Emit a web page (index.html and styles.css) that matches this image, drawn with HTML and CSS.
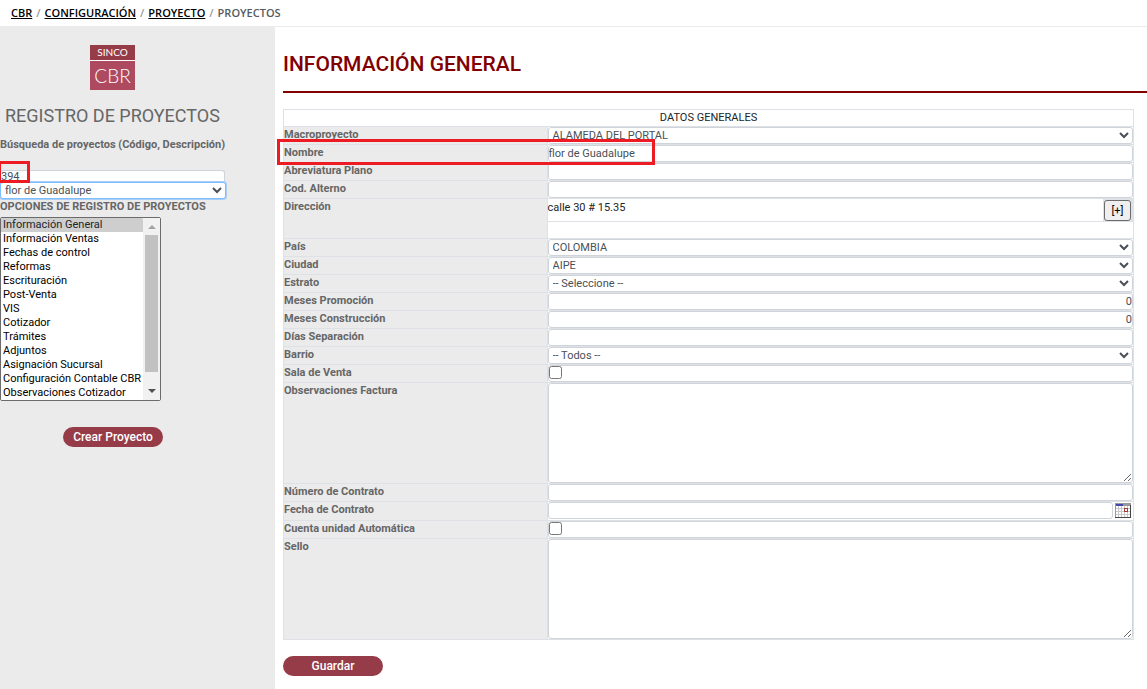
FILE: index.html
```html
<!DOCTYPE html>
<html lang="es">
<head>
<meta charset="utf-8">
<meta name="viewport" content="width=device-width, initial-scale=1">
<title>Proyectos</title>
<link rel="stylesheet" href="styles.css">
</head>
<body>
<nav class="breadcrumb" aria-label="Ruta">
  <a href="#">CBR</a><span class="sep">/</span><a href="#">CONFIGURACIÓN</a><span class="sep">/</span><a href="#">PROYECTO</a><span class="sep">/</span><span>PROYECTOS</span>
</nav>
<div class="layout">
  <aside class="sidebar">
    <div class="logo"><span class="logo-top">SINCO</span><span class="logo-main">CBR</span></div>
    <h2 class="side-title">REGISTRO DE PROYECTOS</h2>
    <label class="side-label search-label" for="codigo">Búsqueda de proyectos (Código, Descripción)</label>
    <div class="search">
      <input class="field search-input" id="codigo" type="text" value="394">
      <span class="mark mark-code"></span>
      <select class="field search-select" aria-label="Proyecto"><option>flor de Guadalupe</option></select>
    </div>
    <label class="side-label" for="opciones">OPCIONES DE REGISTRO DE PROYECTOS</label>
    <div class="listbox">
      <select class="options" id="opciones" size="13">
        <option selected>Información General</option>
        <option>Información Ventas</option>
        <option>Fechas de control</option>
        <option>Reformas</option>
        <option>Escrituración</option>
        <option>Post-Venta</option>
        <option>VIS</option>
        <option>Cotizador</option>
        <option>Trámites</option>
        <option>Adjuntos</option>
        <option>Asignación Sucursal</option>
        <option>Configuración Contable CBR</option>
        <option>Observaciones Cotizador</option>
      </select>
      <div class="scrollbar" aria-hidden="true">
        <svg width="8" height="4" viewBox="0 0 8 4"><path fill="#a3a3a3" d="M0 4h8L4 0z"/></svg>
        <span class="thumb"></span>
        <svg width="8" height="4" viewBox="0 0 8 4"><path fill="#505050" d="M0 0h8L4 4z"/></svg>
      </div>
    </div>
    <button class="pill create" type="button">Crear Proyecto</button>
  </aside>
  <main class="main">
    <h1 class="title">INFORMACIÓN GENERAL</h1>
    <form class="form">
      <table class="data">
        <colgroup><col class="col-label"><col></colgroup>
        <thead><tr><th class="caption" colspan="2">DATOS GENERALES</th></tr></thead>
        <tbody>
          <tr><th><label for="macro">Macroproyecto</label></th><td><select class="field" id="macro"><option>ALAMEDA DEL PORTAL</option></select></td></tr>
          <tr class="marked"><th><label for="nombre">Nombre</label><span class="mark mark-name"></span></th><td><input class="field" id="nombre" type="text" value="flor de Guadalupe"></td></tr>
          <tr><th><label for="abrev">Abreviatura Plano</label></th><td><input class="field" id="abrev" type="text"></td></tr>
          <tr><th><label for="alterno">Cod. Alterno</label></th><td><input class="field" id="alterno" type="text"></td></tr>
          <tr><th>Dirección</th><td class="address-cell"><div class="address"><span class="address-text">calle 30 # 15.35</span><button class="plus" type="button">[+]</button></div></td></tr>
          <tr><th><label for="pais">País</label></th><td><select class="field" id="pais"><option>COLOMBIA</option></select></td></tr>
          <tr><th><label for="ciudad">Ciudad</label></th><td><select class="field" id="ciudad"><option>AIPE</option></select></td></tr>
          <tr><th><label for="estrato">Estrato</label></th><td><select class="field" id="estrato"><option>-- Seleccione --</option></select></td></tr>
          <tr><th><label for="promo">Meses Promoción</label></th><td><input class="field number" id="promo" type="text" value="0"></td></tr>
          <tr><th><label for="constr">Meses Construcción</label></th><td><input class="field number" id="constr" type="text" value="0"></td></tr>
          <tr><th><label for="dias">Días Separación</label></th><td><input class="field" id="dias" type="text"></td></tr>
          <tr><th><label for="barrio">Barrio</label></th><td><select class="field" id="barrio"><option>-- Todos --</option></select></td></tr>
          <tr><th><label for="sala">Sala de Venta</label></th><td><div class="field check"><input type="checkbox" id="sala"></div></td></tr>
          <tr><th><label for="obs">Observaciones Factura</label></th><td><textarea class="field area" id="obs"></textarea></td></tr>
          <tr><th><label for="contrato">Número de Contrato</label></th><td><input class="field" id="contrato" type="text"></td></tr>
          <tr><th><label for="fecha">Fecha de Contrato</label></th><td><div class="date"><input class="field" id="fecha" type="text"><button class="calendar" type="button" aria-label="Calendario"><svg width="16" height="15" viewBox="0 0 16 15" shape-rendering="crispEdges"><path fill="#c8c8c8" d="M0 0h16v15H0z"/><path fill="#999" d="M0 0h16v3H0zM0 0h1v15H0z"/><path fill="#4646ae" d="M1 1h7v2H1z"/><path fill="#fff" d="M1 3h2v2H1zm3 0h2v2H4zm3 0h2v2H7zm3 0h2v2h-2zm3 0h2v2h-2zM1 6h2v2H1zm3 0h2v2H4zm3 0h2v2H7zm6 0h2v2h-2zM1 9h2v2H1zm3 0h2v2H4zm3 0h2v2H7zm3 0h2v2h-2zm3 0h2v2h-2zM1 12h2v2H1zm3 0h2v2H4zm3 0h2v2H7zm3 0h2v2h-2zm3 0h2v2h-2z"/><path fill="#a33a38" d="M9 5h4v4H9z"/><path fill="#fff" d="M10 6h2v2h-2z"/><path fill="#444" d="M0 14h16v1H0zM15 2h1v13h-1z"/></svg></button></div></td></tr>
          <tr><th><label for="cuenta">Cuenta unidad Automática</label></th><td><div class="field check"><input type="checkbox" id="cuenta"></div></td></tr>
          <tr><th><label for="sello">Sello</label></th><td><textarea class="field area" id="sello"></textarea></td></tr>
        </tbody>
      </table>
      <button class="pill" type="button">Guardar</button>
    </form>
  </main>
</div>
</body>
</html>
```
FILE: styles.css
```css
* { box-sizing: border-box; }
body {
  margin: 0;
  min-height: 100vh;
  display: flex;
  flex-direction: column;
  background: #fff;
  color: #212529;
  font: 11px/16px Roboto, "Liberation Sans", sans-serif;
}
button, input, select, textarea { font: inherit; margin: 0; }

.breadcrumb {
  display: flex;
  height: 27px;
  align-items: center;
  padding-left: 11px;
  border-bottom: 1px solid #ebebeb;
  color: #555b61;
  font: 600 11px/16px "Open Sans", "Noto Sans", sans-serif;
}
.breadcrumb a { color: #000; }
.sep { padding: 0 4px; color: #999; }

.layout { display: flex; flex: 1; }
.sidebar {
  flex: 0 0 275px;
  display: flex;
  flex-direction: column;
  align-items: flex-start;
  padding-top: 18px;
  background: #ebebeb;
  color: #666;
}
.logo {
  display: grid;
  grid-template-rows: 15px 29px;
  gap: 1px;
  width: 45px;
  margin-left: 90px;
  background: #fff;
  color: #fff;
  text-align: center;
  font-family: Lato, sans-serif;
}
.logo-top { background: #963c49; font-size: 10px; line-height: 15px; }
.logo-main { background: #ae4a60; font-size: 19px; line-height: 29px; font-weight: 300; }
.side-title { margin: 14px 0 0 5px; font-size: 18px; line-height: 24px; font-weight: 400; }
.side-label { font-weight: 700; }
.search-label { margin: 9px 0 17px; }
.search { position: relative; width: 226px; }
.field {
  display: block;
  width: 100%;
  height: 17px;
  padding: 0;
  border: 1px solid #ced4da;
  border-radius: 3px;
  background-color: #fff;
  color: #495057;
  outline: 0;
}
.search-input { width: 225px; height: 12px; border-bottom: 0; border-radius: 3px 3px 0 0; }
.search-select { height: 17px; border-color: #80bdff; box-shadow: 0 0 0 1px #a9cdf5; }
.listbox {
  display: flex;
  width: 161px;
  height: 184px;
  margin-top: 2px;
  border: 1px solid #6b6b6b;
  border-radius: 2px;
  background: #fff;
}
.options {
  flex: 1;
  min-width: 0;
  height: 182px;
  padding: 0;
  border: 0;
  background: #fff;
  color: #000;
  outline: 0;
  overflow: hidden;
}
.options option { height: 14px; min-height: 14px; padding: 0 2px 1px; line-height: 13px; }
.options option:checked { background: #cecece linear-gradient(#cecece, #cecece); color: #212529; }
.scrollbar {
  flex: 0 0 17px;
  display: flex;
  flex-direction: column;
  align-items: center;
  padding: 7px 2px;
  background: #f1f1f1;
}
.thumb { width: 13px; height: 137px; margin: 6px 0 17px; background: #c1c1c1; }

.pill {
  width: 100px;
  height: 20px;
  padding: 0;
  border: 0;
  border-radius: 10px;
  background: #963c49;
  color: #fff;
  font-size: 12px;
  font-weight: 500;
  line-height: 20px;
}
.create { margin: 26px 0 0 63px; }

.main { flex: 1; min-width: 0; padding-left: 8px; }
.title {
  margin: 0;
  padding: 23px 0 13px;
  border-bottom: 2px solid #800000;
  color: #800000;
  font-size: 21px;
  line-height: 28px;
  font-weight: 500;
}
.form { padding: 16px 13px 12px 0; }
.data { width: 100%; margin-bottom: 16px; border-collapse: collapse; table-layout: fixed; }
.col-label { width: 31%; }
.data th, .data td { padding: 0; border: 1px solid #dee2e6; vertical-align: top; }
.data tbody th {
  height: 17px;
  background: #ebebeb;
  color: #666;
  font-weight: 700;
  line-height: 15px;
  text-align: left;
}
.data th.caption { height: 16px; font-weight: 400; line-height: 16px; text-align: center; }
.number { text-align: right; }
.check { display: flex; align-items: flex-start; }
.check input { width: 13px; height: 13px; }
.area { height: 100px; resize: both; }
.address-cell { height: 40px; }
.address { display: flex; height: 23px; border-bottom: 1px solid #dee2e6; background: #dee2e6; }
.address-text { flex: 1; border-right: 1px solid #dee2e6; background: #fff; line-height: 18px; }
.plus {
  width: 27px;
  height: 21px;
  margin: 1px 2px 0 0;
  padding: 0;
  border: 1px solid #6b6b6b;
  border-radius: 3px;
  background: #efefef;
  color: #000;
}
.date { display: flex; gap: 2px; height: 18px; padding-right: 2px; }
.date .field { flex: 1; min-width: 0; }
.calendar { width: 16px; height: 15px; margin-top: 1px; padding: 0; border: 0; background: none; line-height: 0; }
.calendar svg { display: block; }

/* Highlight frames laid over the form */
.marked { position: relative; }
.mark { position: absolute; border: 3px solid #ed1c24; pointer-events: none; }
.mark-code { left: -2px; top: -9px; width: 32px; height: 22px; }
.mark-name { left: -7px; top: -6px; width: 378px; height: 26px; }
```
